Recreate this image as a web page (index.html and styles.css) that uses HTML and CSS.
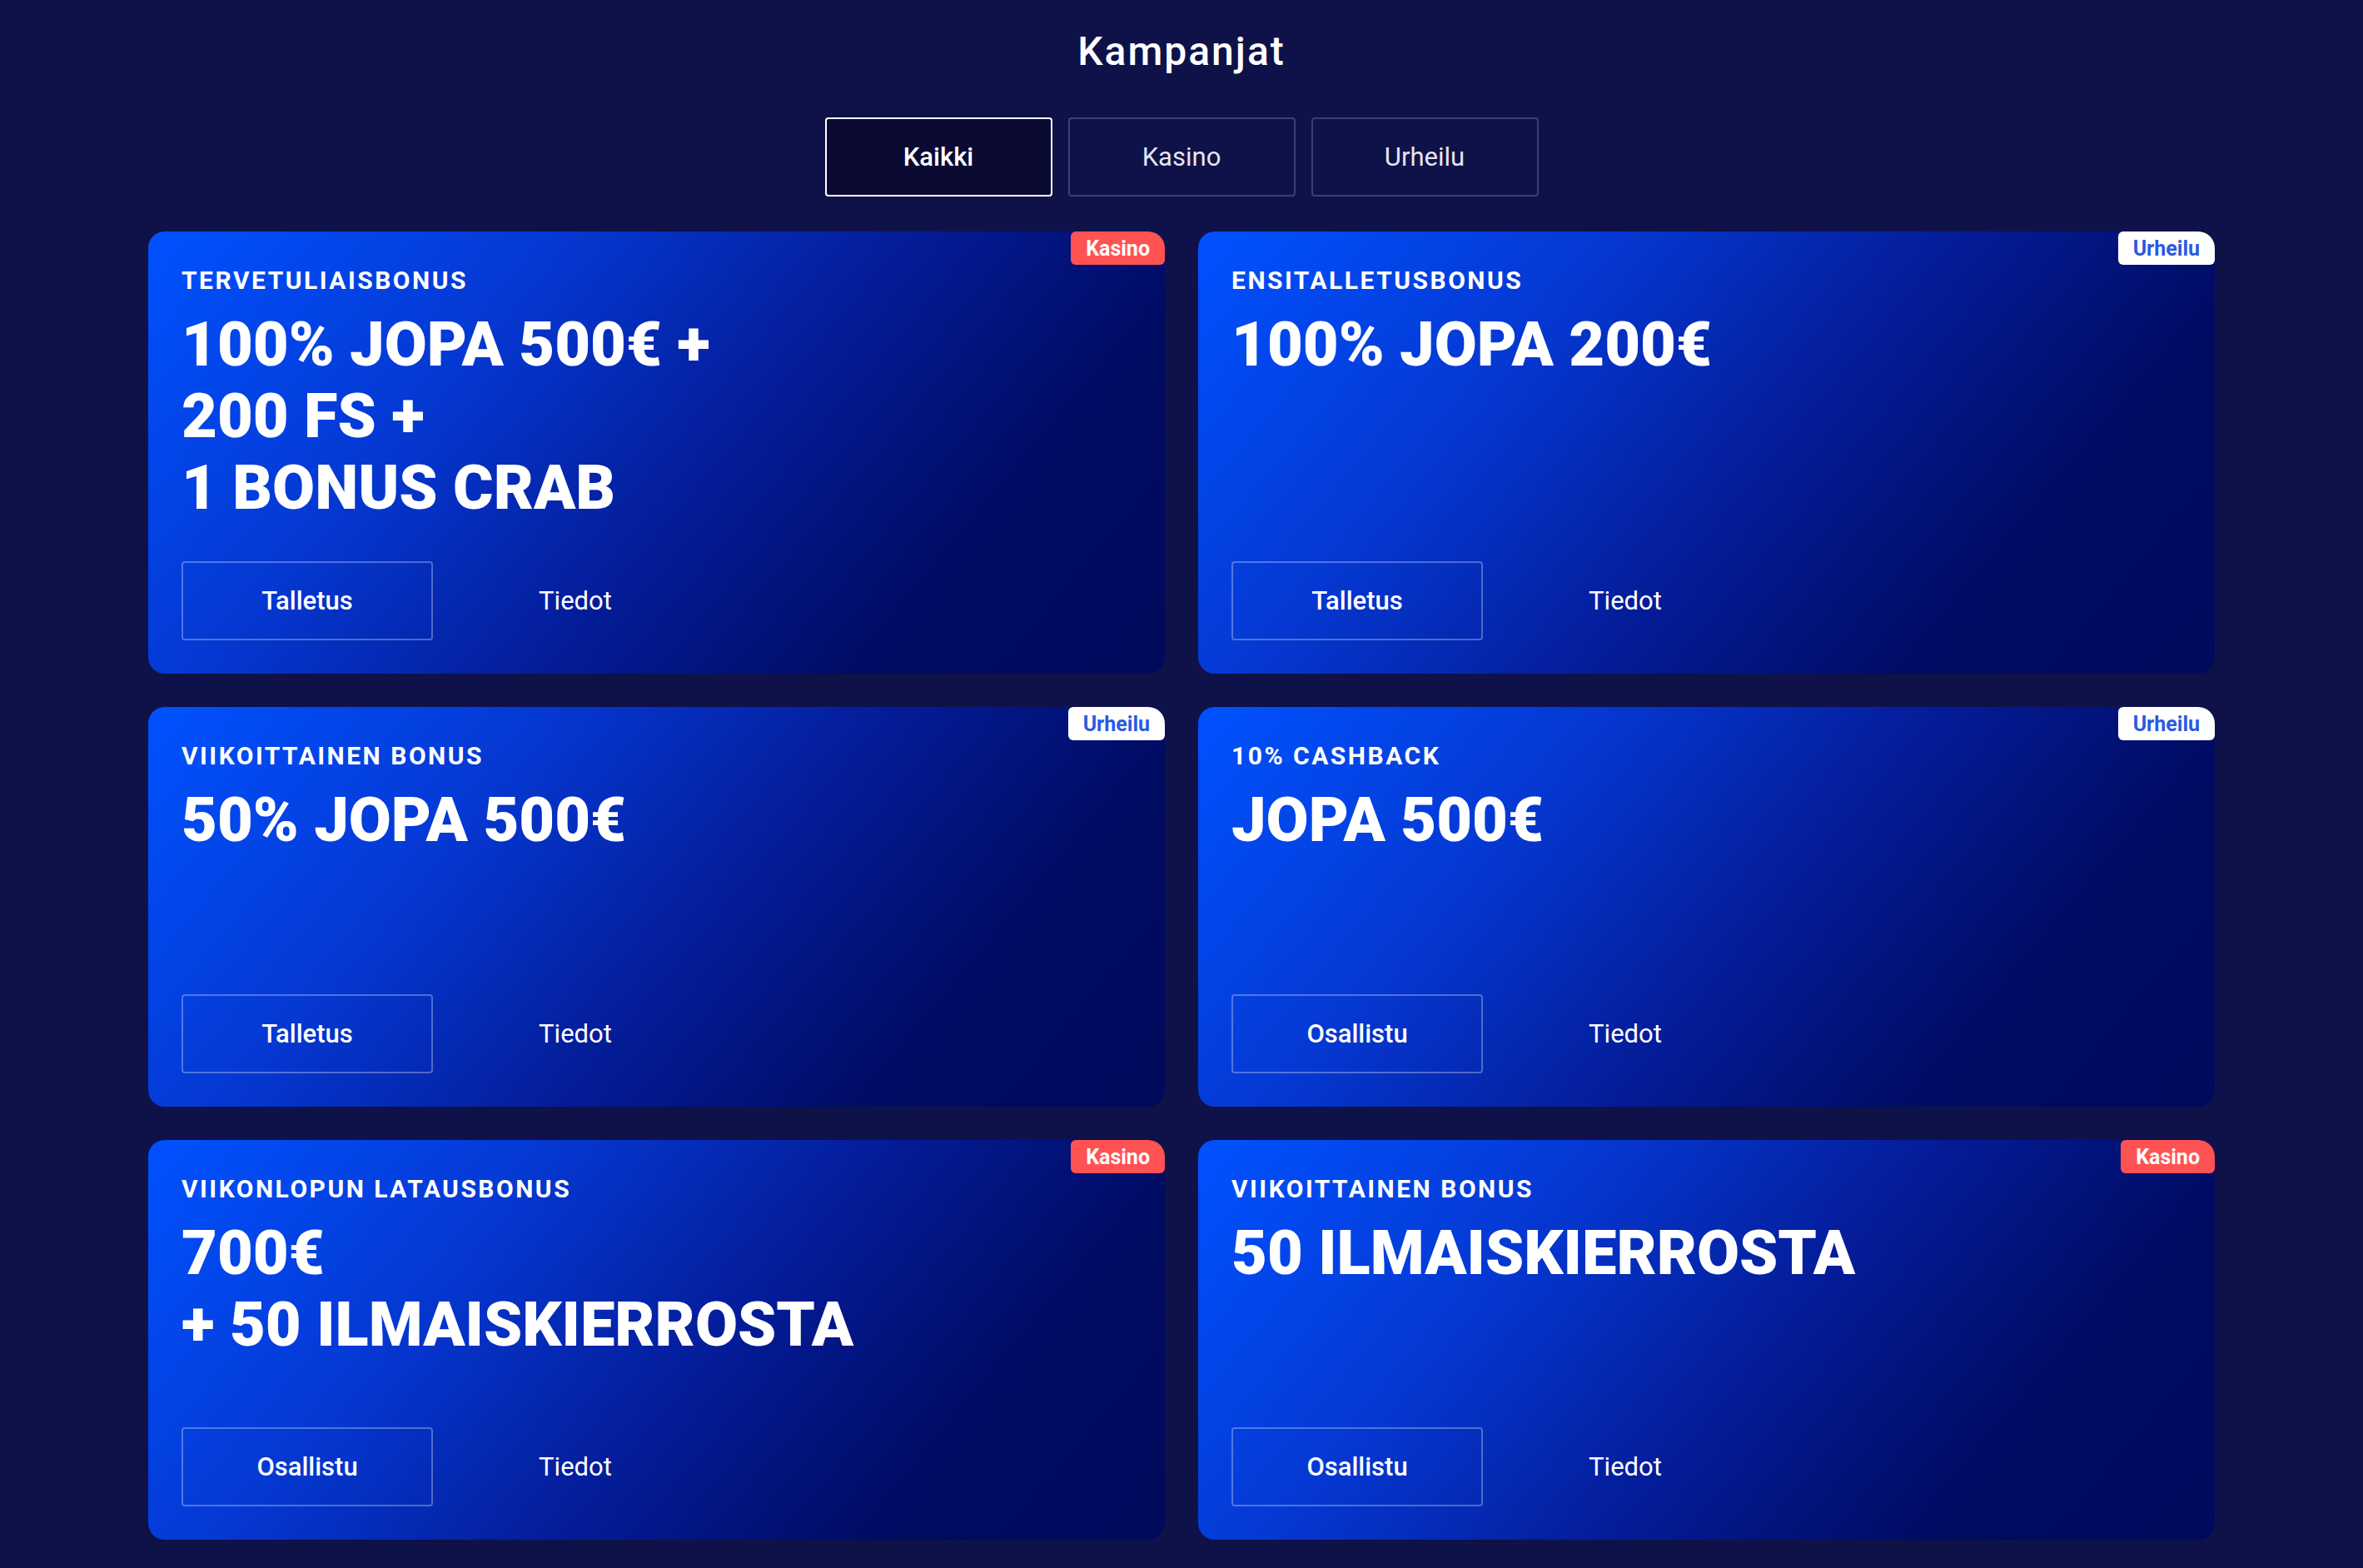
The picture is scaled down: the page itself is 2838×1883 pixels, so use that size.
FILE: index.html
```html
<!DOCTYPE html>
<html lang="fi">
<head>
<meta charset="utf-8">
<title>Kampanjat</title>
<link rel="stylesheet" href="styles.css">
</head>
<body>
<main class="page">
  <h1 class="page-title">Kampanjat</h1>

  <nav class="tabs">
    <button class="tab tab--active">Kaikki</button>
    <button class="tab">Kasino</button>
    <button class="tab">Urheilu</button>
  </nav>

  <section class="promo-grid">
    <article class="promo">
      <span class="badge badge--casino">Kasino</span>
      <p class="promo-kicker">TERVETULIAISBONUS</p>
      <h2 class="promo-title">100% JOPA 500€ +<br>200 FS +<br>1 BONUS CRAB</h2>
      <div class="promo-actions">
        <button class="btn btn--outline">Talletus</button>
        <button class="btn btn--ghost">Tiedot</button>
      </div>
    </article>

    <article class="promo">
      <span class="badge badge--sport">Urheilu</span>
      <p class="promo-kicker">ENSITALLETUSBONUS</p>
      <h2 class="promo-title">100% JOPA 200€</h2>
      <div class="promo-actions">
        <button class="btn btn--outline">Talletus</button>
        <button class="btn btn--ghost">Tiedot</button>
      </div>
    </article>

    <article class="promo">
      <span class="badge badge--sport">Urheilu</span>
      <p class="promo-kicker">VIIKOITTAINEN BONUS</p>
      <h2 class="promo-title">50% JOPA 500€</h2>
      <div class="promo-actions">
        <button class="btn btn--outline">Talletus</button>
        <button class="btn btn--ghost">Tiedot</button>
      </div>
    </article>

    <article class="promo">
      <span class="badge badge--sport">Urheilu</span>
      <p class="promo-kicker">10% CASHBACK</p>
      <h2 class="promo-title">JOPA 500€</h2>
      <div class="promo-actions">
        <button class="btn btn--outline">Osallistu</button>
        <button class="btn btn--ghost">Tiedot</button>
      </div>
    </article>

    <article class="promo">
      <span class="badge badge--casino">Kasino</span>
      <p class="promo-kicker">VIIKONLOPUN LATAUSBONUS</p>
      <h2 class="promo-title">700€<br>+ 50 ILMAISKIERROSTA</h2>
      <div class="promo-actions">
        <button class="btn btn--outline">Osallistu</button>
        <button class="btn btn--ghost">Tiedot</button>
      </div>
    </article>

    <article class="promo">
      <span class="badge badge--casino">Kasino</span>
      <p class="promo-kicker">VIIKOITTAINEN BONUS</p>
      <h2 class="promo-title">50 ILMAISKIERROSTA</h2>
      <div class="promo-actions">
        <button class="btn btn--outline">Osallistu</button>
        <button class="btn btn--ghost">Tiedot</button>
      </div>
    </article>
  </section>
</main>
</body>
</html>
```

FILE: styles.css
```css
* {
  box-sizing: border-box;
}

html,
body {
  margin: 0;
  padding: 0;
}

body {
  background: #0e1249;
  color: #ffffff;
  font-family: Roboto, "Noto Sans", "Liberation Sans", sans-serif;
  min-height: 100vh;
}

.page {
  display: flex;
  flex-direction: column;
  align-items: center;
  padding-top: 34px;
}

.page-title {
  margin: 0;
  font-size: 48px;
  font-weight: 500;
  letter-spacing: 2px;
  line-height: 56px;
  color: #ffffff;
}

/* filter tabs */
.tabs {
  display: flex;
  gap: 19px;
  margin-top: 51px;
}

.tab {
  width: 273px;
  height: 95px;
  border: 2px solid #3b3f76;
  border-radius: 4px;
  background: transparent;
  color: #e4e5f1;
  font-family: inherit;
  font-size: 31px;
  font-weight: 400;
  cursor: pointer;
}

.tab--active {
  background: #0a0a33;
  border-color: #ffffff;
  color: #ffffff;
  font-weight: 500;
}

/* promotion cards */
.promo-grid {
  display: grid;
  grid-template-columns: 1fr 1fr;
  gap: 40px;
  width: 2482px;
  margin-top: 42px;
}

.promo {
  position: relative;
  display: flex;
  flex-direction: column;
  min-height: 480px;
  padding: 41px 40px 40px;
  border-radius: 20px;
  background: linear-gradient(130deg, #0052ff 0%, #0538d2 30%, #041c98 55%, #000b63 78%, #000a5c 100%);
}

.badge {
  position: absolute;
  top: 0;
  right: 0;
  height: 40px;
  padding: 0 18px;
  display: flex;
  align-items: center;
  font-size: 25px;
  font-weight: 700;
  border-radius: 6px 20px 6px 6px;
}

.badge--casino {
  background: #ff5252;
  color: #ffffff;
}

.badge--sport {
  background: #ffffff;
  color: #2a5ae0;
}

.promo-kicker {
  margin: 0;
  font-size: 30px;
  font-weight: 700;
  letter-spacing: 2.5px;
  line-height: 1.2;
}

.promo-title {
  margin: 16px 0 0;
  font-size: 74px;
  font-weight: 900;
  line-height: 86px;
}

.promo-actions {
  display: flex;
  gap: 20px;
  margin-top: auto;
  padding-top: 45px;
}

.btn {
  width: 302px;
  height: 95px;
  border-radius: 4px;
  background: transparent;
  color: #ffffff;
  font-family: inherit;
  font-size: 31px;
  cursor: pointer;
}

.btn--outline {
  border: 2px solid rgba(255, 255, 255, 0.3);
  font-weight: 500;
}

.btn--ghost {
  border: 2px solid transparent;
  font-weight: 400;
}
```
